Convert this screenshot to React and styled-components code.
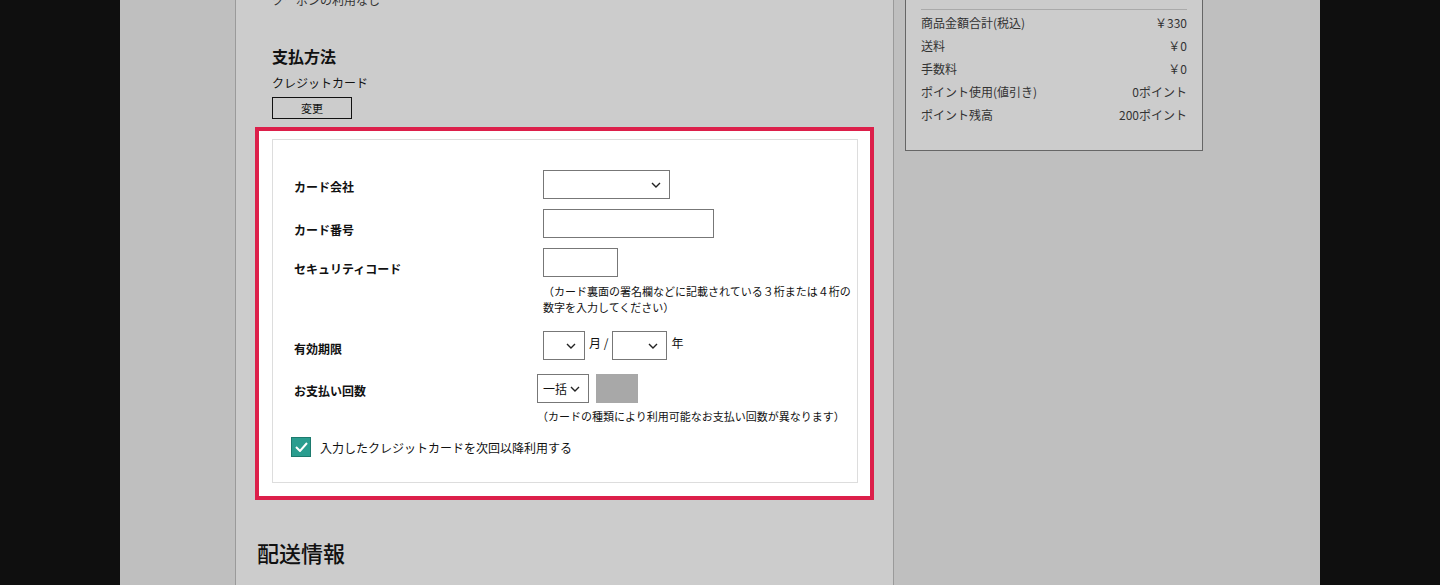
import React from "react";
import styled, { createGlobalStyle } from "styled-components";

const G = createGlobalStyle`
  html,body{margin:0;padding:0;background:#0f0f0f;}
  body{font-family:"Noto Sans CJK JP","Noto Sans",sans-serif;color:#111;}
`;
const Page = styled.div`width:1200px;height:585px;margin:0 auto;background:#bfbfbf;display:flex;overflow:hidden;`;
const Side = styled.div`width:115px;`;
const Main = styled.div`background:#cccccc;border-left:1px solid #9a9a9a;border-right:1px solid #9a9a9a;padding:0 0 0 19px;width:638px;`;
const Right = styled.div`flex:1;padding-left:11px;`;
const Summary = styled.div`width:266px;height:150px;margin-top:-1px;background:#cccccc;border:1px solid #666;padding:0 15px;`;
const Sline = styled.div`border-top:1px solid #aaa;margin-top:9px;padding-top:1px;`;
const SRow = styled.div`display:flex;justify-content:space-between;font-size:12px;color:#333;height:23px;line-height:23px;`;
const Coupon = styled.div`font-size:12px;margin-top:-9px;padding-left:17px;color:#333;height:18px;`;
const H2 = styled.div`font-size:16px;font-weight:700;padding-left:17px;margin-top:35px;line-height:24px;`;
const P = styled.div`font-size:12px;padding-left:17px;margin-top:7px;line-height:16px;`;
const Btn = styled.div`margin:6px 0 0 17px;width:78px;height:20px;border:1px solid #111;font-size:11px;display:flex;align-items:center;justify-content:center;`;
const Red = styled.div`margin-top:8px;width:586px;height:357px;border:4px solid #dc1f4a;background:#fff;padding:8px 12px 0 13px;box-sizing:content-box;`;
const Card = styled.div`border:1px solid #ddd;height:344px;padding:30px 0 0 21px;box-sizing:border-box;`;
const Row = styled.div`display:flex;margin-top:${p=>p.mt}px;`;
const Label = styled.div`width:249px;font-size:12px;font-weight:700;padding-top:${p=>p.pt}px;`;
const Ctrl = styled.div`display:flex;flex-direction:column;`;
const Line = styled.div`display:flex;align-items:flex-start;gap:4px;font-size:12px;`;
const Box = styled.div`width:${p=>p.w}px;height:29px;border:1px solid #777;box-sizing:border-box;background:${p=>p.bg||"#fff"};display:flex;align-items:center;justify-content:${p=>p.txt?"space-between":"flex-end"};padding:0 8px 0 ${p=>p.txt?5:0}px;font-size:12px;`;
const Note = styled.div`font-size:11px;line-height:16px;width:310px;margin-top:6px;`;
const Check = styled.div`display:flex;align-items:center;gap:9px;font-size:12px;margin:13px 0 0 -3px;`;
const CB = styled.div`width:20px;height:20px;background:#2a9d8f;border:1px solid #1d7a6e;box-sizing:border-box;display:flex;align-items:center;justify-content:center;`;
const H1 = styled.div`font-size:22px;font-weight:500;margin-top:36px;padding-left:2px;`;

const Chev = () => <svg width="10" height="6" viewBox="0 0 10 6"><path d="M1 1l4 4 4-4" stroke="#222" strokeWidth="1.4" fill="none"/></svg>;

export default function App(){
  return <><G/><Page><Side/><Main>
    <Coupon>クーポンの利用なし</Coupon>
    <H2>支払方法</H2>
    <P>クレジットカード</P>
    <Btn>変更</Btn>
    <Red><Card>
      <Row mt={0}><Label pt={8}>カード会社</Label><Box w={127}><Chev/></Box></Row>
      <Row mt={10}><Label pt={12}>カード番号</Label><Box w={171}/></Row>
      <Row mt={10}><Label pt={12}>セキュリティコード</Label><Ctrl><Box w={75}/><Note>（カード裏面の署名欄などに記載されている３桁または４桁の数字を入力してください）</Note></Ctrl></Row>
      <Row mt={16}><Label pt={9}>有効期限</Label><Line><Box w={42}><Chev/></Box><span style={{paddingTop:3}}>月 /</span><Box w={55}><Chev/></Box><span style={{paddingTop:3}}>年</span></Line></Row>
      <Row mt={14}><Label pt={8}>お支払い回数</Label><Ctrl><Line style={{gap:7}}><Box w={52} txt>一括<Chev/></Box><Box w={42} bg="#a8a8a8" style={{border:"none"}}/></Line><Note style={{width:320,marginTop:5}}>（カードの種類により利用可能なお支払い回数が異なります）</Note></Ctrl></Row>
      <Check><CB><svg width="13" height="10" viewBox="0 0 13 10"><path d="M1 5l4 4 7-8" stroke="#fff" strokeWidth="2" fill="none"/></svg></CB>入力したクレジットカードを次回以降利用する</Check>
    </Card></Red>
    <H1>配送情報</H1>
  </Main><Right><Summary><Sline>
    <SRow><span>商品金額合計(税込)</span><span>￥330</span></SRow>
    <SRow><span>送料</span><span>￥0</span></SRow>
    <SRow><span>手数料</span><span>￥0</span></SRow>
    <SRow><span>ポイント使用(値引き)</span><span>0ポイント</span></SRow>
    <SRow><span>ポイント残高</span><span>200ポイント</span></SRow>
  </Sline></Summary></Right></Page></>;
}
